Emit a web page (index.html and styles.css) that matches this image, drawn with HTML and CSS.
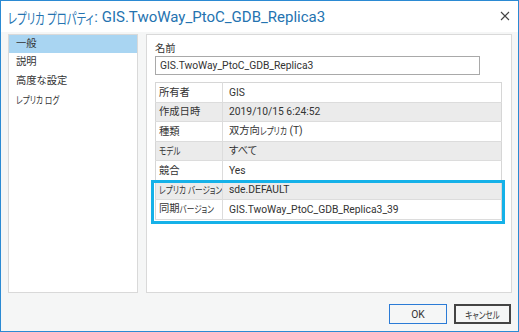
FILE: index.html
```html
<!DOCTYPE html>
<html lang="ja">
<head>
  <meta charset="UTF-8">
  <title>レプリカ プロパティ</title>
  <link rel="stylesheet" href="styles.css">
</head>
<body>
  <div class="ventana">
    <div class="titulo">
      <span><span class="k">レプリカ&nbsp;プロパティ</span>: GIS.TwoWay_PtoC_GDB_Replica3</span>
      <svg class="cerrar" width="10" height="10" viewBox="0 0 10 10">
        <path d="M1 1 L9 9 M9 1 L1 9" stroke="#444" stroke-width="1.1" fill="none"/>
      </svg>
    </div>

    <div class="cuerpo">
      <ul class="menu">
        <li class="activo">一般</li>
        <li>説明</li>
        <li>高度な設定</li>
        <li><span class="k">レプリカ&nbsp;ログ</span></li>
      </ul>

      <div class="panel">
        <label class="etiqueta">名前</label>
        <div class="campo">GIS.TwoWay_PtoC_GDB_Replica3</div>

        <div class="tabla-wrap">
          <table class="tabla">
            <tr><td class="col1">所有者</td><td>GIS</td></tr>
            <tr class="gris"><td class="col1">作成日時</td><td>2019/10/15 6:24:52</td></tr>
            <tr><td class="col1">種類</td><td>双方向<span class="k">レプリカ</span> (T)</td></tr>
            <tr class="gris"><td class="col1"><span class="k">モデル</span></td><td>すべて</td></tr>
            <tr><td class="col1">競合</td><td>Yes</td></tr>
            <tr class="gris"><td class="col1"><span class="k">レプリカ&nbsp;バージョン</span></td><td>sde.DEFAULT</td></tr>
            <tr><td class="col1">同期<span class="k">バージョン</span></td><td>GIS.TwoWay_PtoC_GDB_Replica3_39</td></tr>
          </table>
          <div class="resaltado"></div>
        </div>
      </div>
    </div>

    <div class="pie">
      <button class="ok">OK</button>
      <button class="cancelar"><span class="k">キャンセル</span></button>
    </div>
  </div>
</body>
</html>
```

FILE: styles.css
```css
body {
  margin: 0;
  padding: 0;
  font-family: 'Roboto', 'Noto Sans CJK JP', sans-serif;
  font-feature-settings: "palt";
  font-size: 10.3px;
  color: #333;
}

/* katakana estrecha, como la fuente de Windows */
.k {
  display: inline-block;
  font-size: 0.74em;
  transform: scaleY(1.32);
}

.ventana {
  width: 519px;
  height: 332px;
  box-sizing: border-box;
  border: 1px solid #2b8ad3;
  background-color: #f5f6f6;
  display: flex;
  flex-direction: column;
}

.titulo {
  height: 31px;
  background-color: #fff;
  display: flex;
  align-items: center;
  justify-content: space-between;
  padding: 0 8px 0 7px;
  font-size: 15px;
  color: #2473b0;
  flex-shrink: 0;
}

.titulo .k {
  font-size: 0.69em;
  transform: scaleY(1.4);
  margin-right: 1px;
}

.cerrar {
  margin-top: -1px;
}

.cuerpo {
  display: flex;
  gap: 8px;
  padding: 2px 6px 0 7px;
  height: 259px;
}

.menu {
  list-style: none;
  margin: 0;
  padding: 0;
  width: 130px;
  box-sizing: border-box;
  background-color: #fff;
  border: 1px solid #d9d9d9;
}

.menu li {
  height: 19px;
  line-height: 18px;
  padding-left: 7px;
}

.menu li.activo {
  background-color: #a9d5f2;
  height: 18px;
}

.panel {
  width: 366px;
  box-sizing: border-box;
  background-color: #fff;
  border: 1px solid #d9d9d9;
  padding: 6px 9px 0 8px;
}

.etiqueta {
  display: block;
  height: 15px;
  line-height: 15px;
}

.campo {
  width: 325px;
  height: 19px;
  box-sizing: border-box;
  border: 1px solid #a9a9a9;
  line-height: 17px;
  padding-left: 4px;
  margin-bottom: 7px;
}

.tabla-wrap {
  position: relative;
}

.tabla {
  width: 347px;
  table-layout: fixed;
  border-collapse: collapse;
  border: 1px solid #d6d6d6;
}

.tabla td {
  height: 19.5px;
  box-sizing: border-box;
  padding: 0 0 0 6px;
  border-bottom: 1px solid #dcdcdc;
  line-height: 17px;
  white-space: nowrap;
  overflow: hidden;
}

.tabla td.col1 {
  width: 67px;
  padding-left: 3px;
  border-right: 1px solid #dcdcdc;
}

.tabla tr.gris td {
  background-color: #ebebeb;
}

.resaltado {
  position: absolute;
  left: -4px;
  top: 98px;
  width: 348px;
  height: 38px;
  border: 3px solid #15b1e8;
}

.pie {
  display: flex;
  justify-content: flex-end;
  gap: 7px;
  padding: 11px 7px 0 0;
}

button {
  font-family: 'Roboto', 'Noto Sans CJK JP', sans-serif;
  font-feature-settings: "palt";
  font-size: 10.3px;
  color: #333;
  background-color: #f5f6f6;
  height: 20px;
  padding: 0;
  white-space: nowrap;
  cursor: pointer;
}

.ok {
  width: 58px;
  border: 1px solid #2b7bd6;
}

.cancelar {
  width: 57px;
  border: 2px solid #444;
}
```
